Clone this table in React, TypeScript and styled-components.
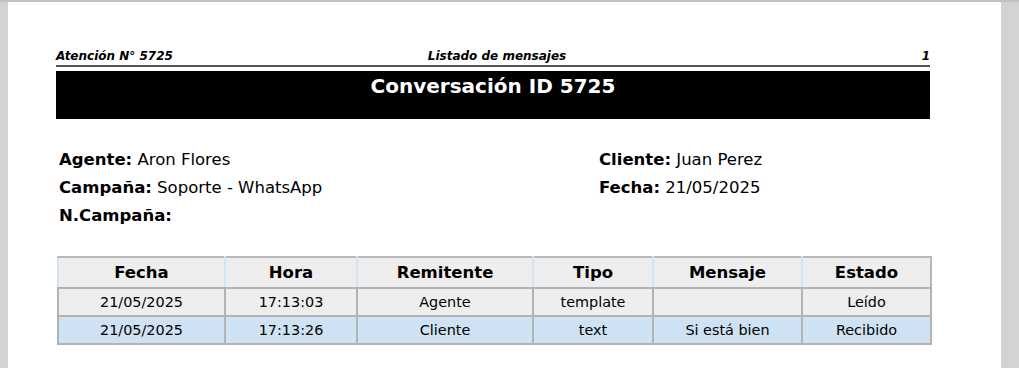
import styled, { createGlobalStyle } from 'styled-components';

const GlobalStyle = createGlobalStyle`
  html, body {
    margin: 0;
    padding: 0;
    background: #d3d3d5;
    font-family: "DejaVu Sans", Verdana, sans-serif;
    color: #000;
  }
`;

const Viewer = styled.div`
  height: 368px;
  border-top: 2px solid #c2c2c2;
  box-sizing: border-box;
  overflow: hidden;
`;

const Page = styled.div`
  margin-left: 8px;
  width: 993px;
  height: 100%;
  background: #fff;
  box-sizing: border-box;
  padding: 45px 0 0 48px;
`;

const Sheet = styled.div`
  width: 874px;
`;

const RunningHeader = styled.div`
  display: grid;
  grid-template-columns: 1fr auto 1fr;
  align-items: end;
  font-size: 12px;
  font-weight: 700;
  font-style: italic;
  line-height: 18px;
  border-bottom: 2px solid #555;
`;

const HeaderCell = styled.div<{ $align: 'left' | 'center' | 'right' }>`
  text-align: ${(p) => p.$align};
  padding-left: ${(p) => (p.$align === 'center' ? '8px' : '0')};
`;

const TitleBar = styled.div`
  margin-top: 4px;
  height: 48px;
  background: #000;
  color: #fff;
  font-size: 20px;
  font-weight: 700;
  line-height: 22px;
  text-align: center;
  padding-top: 4px;
  box-sizing: border-box;
`;

const InfoGrid = styled.div`
  display: grid;
  grid-template-columns: 540px 1fr;
  grid-auto-rows: 28px;
  align-items: center;
  margin-top: 26px;
  padding-left: 3px;
  font-size: 16.5px;
`;

const Label = styled.span`
  font-weight: 700;
`;

const Messages = styled.table`
  margin: 27px 0 0 1px;
  width: 873px;
  border-collapse: collapse;
  table-layout: fixed;
  text-align: center;
  border: 2px solid #b6b6b6;
`;

const HeadCell = styled.th`
  height: 29px;
  padding: 0;
  background: #eeeeee;
  font-size: 16.5px;
  font-weight: 700;
  border-top: 2px solid #b9b9b9;
  border-left: 2px solid #d3e4f3;
  border-right: 2px solid #d3e4f3;
  border-bottom: 2px solid #b3b3b3;

  &:last-child {
    border-right: 2px solid #b6b6b6;
  }
`;

const Row = styled.tr<{ $tone: 'gray' | 'blue' }>`
  background: ${(p) => (p.$tone === 'blue' ? '#cfe2f3' : '#eeeeee')};
`;

const Cell = styled.td`
  height: 26px;
  padding: 0;
  font-size: 14.4px;
  border: 2px solid #b3b3b3;
`;

const columns = [
  { title: 'Fecha', width: 167 },
  { title: 'Hora', width: 132 },
  { title: 'Remitente', width: 176 },
  { title: 'Tipo', width: 120 },
  { title: 'Mensaje', width: 149 },
  { title: 'Estado', width: 129 },
];

const rows = [
  ['21/05/2025', '17:13:03', 'Agente', 'template', '', 'Leído'],
  ['21/05/2025', '17:13:26', 'Cliente', 'text', 'Si está bien', 'Recibido'],
];

export default function App() {
  return (
    <>
      <GlobalStyle />
      <Viewer>
        <Page>
          <Sheet>
            <RunningHeader>
              <HeaderCell $align="left">Atención N° 5725</HeaderCell>
              <HeaderCell $align="center">Listado de mensajes</HeaderCell>
              <HeaderCell $align="right">1</HeaderCell>
            </RunningHeader>

            <TitleBar>Conversación ID 5725</TitleBar>

            <InfoGrid>
              <div>
                <Label>Agente:</Label> Aron Flores
              </div>
              <div>
                <Label>Cliente:</Label> Juan Perez
              </div>
              <div>
                <Label>Campaña:</Label> Soporte - WhatsApp
              </div>
              <div>
                <Label>Fecha:</Label> 21/05/2025
              </div>
              <div>
                <Label>N.Campaña:</Label>
              </div>
            </InfoGrid>

            <Messages>
              <colgroup>
                {columns.map((c) => (
                  <col key={c.title} style={{ width: c.width }} />
                ))}
              </colgroup>
              <thead>
                <tr>
                  {columns.map((c) => (
                    <HeadCell key={c.title}>{c.title}</HeadCell>
                  ))}
                </tr>
              </thead>
              <tbody>
                {rows.map((r, i) => (
                  <Row key={i} $tone={i % 2 ? 'blue' : 'gray'}>
                    {r.map((v, j) => (
                      <Cell key={j}>{v}</Cell>
                    ))}
                  </Row>
                ))}
              </tbody>
            </Messages>
          </Sheet>
        </Page>
      </Viewer>
    </>
  );
}
